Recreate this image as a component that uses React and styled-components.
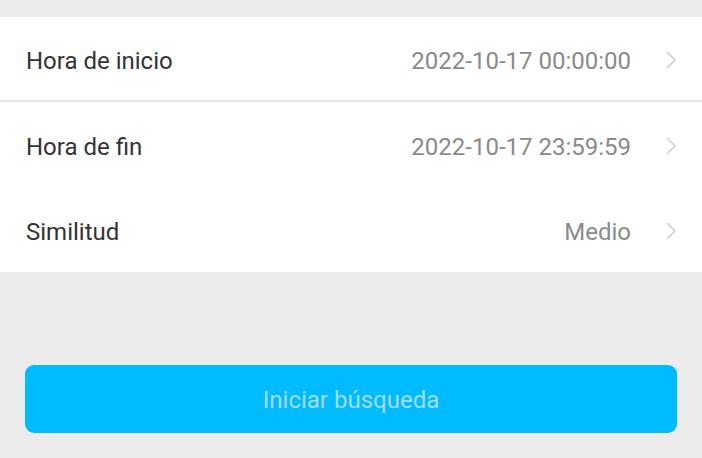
import React from 'react'
import styled, { createGlobalStyle } from 'styled-components'

const Global = createGlobalStyle`
   html, body {
      margin:0;
      padding:0;
      background:#ececec;
      font-family:Roboto, "Noto Sans", sans-serif;
   }
`

const Page = styled.div`
   width:702px;
   height:458px;
   padding-top:17px;
   box-sizing:border-box;
   background:#ececec;
`

const Panel = styled.section`
   background:#fff;
`

const Row = styled.div`
   height:85px;
   box-sizing:border-box;
   display:flex;
   align-items:center;
   padding:0 25px 0 26px;
   border-bottom:${p => (p.divider ? '2px solid #e8e8e8' : 'none')};
`

const Label = styled.span`
   flex:1;
   font-size:24px;
   color:#333;
   padding-top:4px;
`

const Value = styled.span`
   font-size:24px;
   color:#8a8a8a;
   padding-top:4px;
`

const Chevron = styled.svg`
   width:12px;
   height:20px;
   margin-left:34px;
   margin-top:2px;
`

const Footer = styled.div`
   padding:93px 25px 0 25px;
`

const Button = styled.button`
   width:100%;
   height:68px;
   border:none;
   border-radius:9px;
   background:#00bbff;
   color:#a4dcf6;
   font-family:Roboto, "Noto Sans", sans-serif;
   font-size:24px;
   padding-top:3px;
   cursor:pointer;
`

const rows = [
   { label: 'Hora de inicio', value: '2022-10-17 00:00:00', divider: true },
   { label: 'Hora de fin', value: '2022-10-17 23:59:59' },
   { label: 'Similitud', value: 'Medio' },
]

const App = () => (
   <Page>
      <Global />
      <Panel>
         {rows.map(r => (
            <Row key={r.label} divider={r.divider}>
               <Label>{r.label}</Label>
               <Value>{r.value}</Value>
               <Chevron viewBox="0 0 12 20">
                  <path d="M2 2 L10 10 L2 18" fill="none" stroke="#cfcfcf" strokeWidth="1.6" />
               </Chevron>
            </Row>
         ))}
      </Panel>
      <Footer>
         <Button>Iniciar búsqueda</Button>
      </Footer>
   </Page>
)

export default App
